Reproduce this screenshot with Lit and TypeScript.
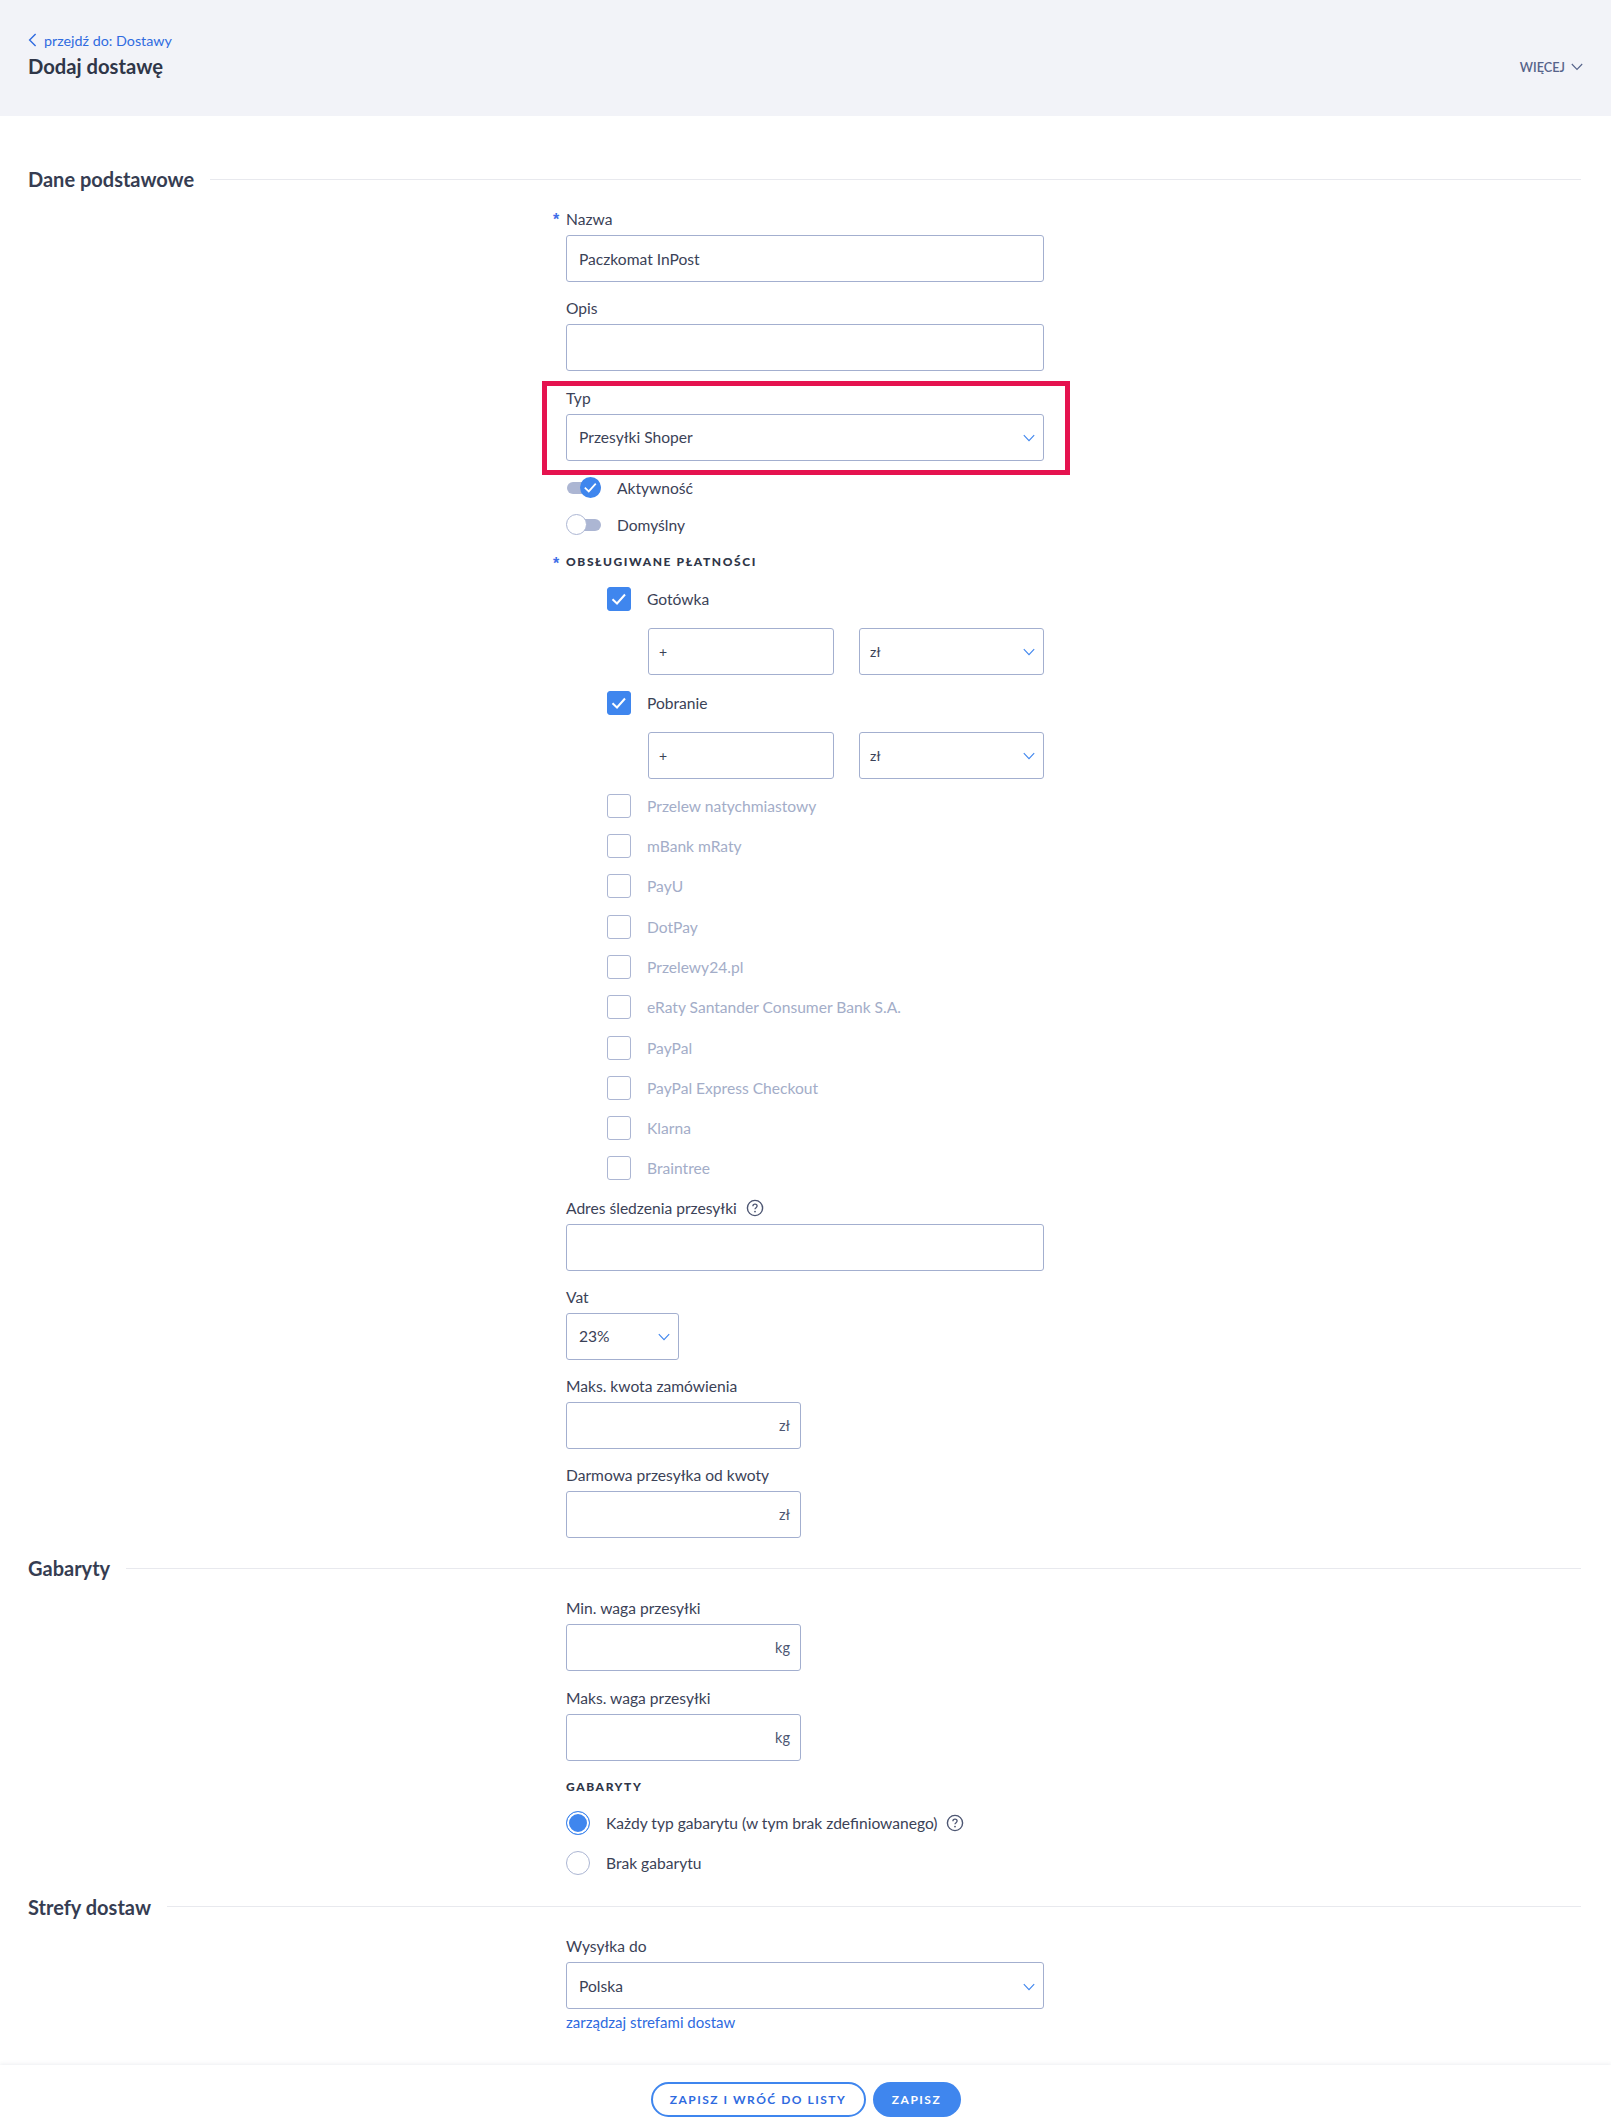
import { LitElement, html, css, svg } from "lit";
import { customElement } from "lit/decorators.js";

const chevron = html`<svg class="chev" viewBox="0 0 12 8" width="12" height="8"><path d="M.8 1.2 6 6.6l5.2-5.4" fill="none" stroke="#3f86ee" stroke-width="1.1"/></svg>`;
const help = html`<svg class="help" viewBox="0 0 18 18" width="18" height="18"><circle cx="9" cy="9" r="7.6" fill="none" stroke="#4d5672" stroke-width="1.4"/><path d="M6.9 7.2c0-1.3 1-2 2.1-2s2.1.7 2.1 1.9c0 1.5-2.1 1.6-2.1 3.2" fill="none" stroke="#4d5672" stroke-width="1.3"/><circle cx="9" cy="12.6" r=".9" fill="#4d5672"/></svg>`;
const tick = svg`<path d="M5.5 12.2 10 16.5l8-9" fill="none" stroke="#fff" stroke-width="2"/>`;

@customElement("app-root")
export class AppRoot extends LitElement {
  static styles = css`
    :host { display: block; font-family: "Lato", "Liberation Sans", sans-serif; font-size: 15.6px; color: #3b4257; background: #fff; height: 2127px; position: relative; overflow: hidden; }
    * { box-sizing: border-box; }
    .header { height: 116px; background: #f2f3f8; padding: 30px 28px 0; display: flex; justify-content: space-between; }
    .back { display: flex; align-items: center; gap: 7px; color: #2f6be0; font-size: 14.3px; height: 20px; }
    h1 { margin: 4px 0 0; font-size: 20.2px; line-height: 24px; font-weight: 700; color: #2f3648; }
    .more { display: flex; align-items: center; gap: 6px; height: 20px; margin-top: 27px; font-size: 12.7px; font-weight: 600; color: #56638a; }
    .section { display: flex; align-items: center; gap: 16px; margin: 0 30px 0 28px; height: 24px; }
    .section h2 { margin: 0; font-size: 20px; font-weight: 700; color: #363d52; white-space: nowrap; line-height: 24px; }
    .section i { flex: 1; height: 1px; background: #e8e9ee; }
    .s1 { margin-top: 51px; }
    .s2 { margin-top: 3.3px; }
    .s3 { margin-top: 12px; }
    .form { width: 478px; margin-left: 566px; display: flex; flex-direction: column; margin-top: 16px; }
    .label { height: 24px; margin-bottom: 4px; line-height: 24px; position: relative; display: flex; align-items: center; gap: 9px; white-space: nowrap; }
    .star { position: absolute; left: -13px; top: 2px; color: #3f6fe8; font: 700 16px/22px "Liberation Sans", sans-serif; letter-spacing: 0; }
    .input { height: 47px; border: 1px solid #a3afcf; border-radius: 3px; display: flex; align-items: center; justify-content: space-between; padding: 0 12px; background: #fff; }
    .field { display: flex; flex-direction: column; margin-bottom: 14.3px; }
    .gab .field { margin-bottom: 15px; }
    .tight { margin-bottom: 0; }
    .chev { flex: none; margin-right: -4px; margin-top: 2px; }
    .w113 { width: 113px; }
    .w235 { width: 235px; }
    .suffix { justify-content: flex-end; padding-right: 10px; font-size: 14.5px; color: #4d5672; }
    .redbox { margin: -5.1px 0 0 -24px; border: 5px solid #e5134f; width: 528px; height: 94px; padding-left: 19px; }
    .redbox .input { width: 478px; }
    .toggle { display: flex; align-items: center; gap: 16px; height: 37px; }
    .first { margin-top: -5.5px; }
    .track { width: 34px; height: 12px; border-radius: 6px; background: #acb6d3; position: relative; margin-left: 1px; }
    .knob { position: absolute; top: -5px; width: 21px; height: 21px; border-radius: 50%; }
    .knob svg { display: block; }
    .knob.on { right: 0; background: #3f86ee; }
    .knob.off { left: -1px; background: #fff; border: 1px solid #acb6d3; }
    .heading { font-size: 12px; font-weight: 900; letter-spacing: 1.6px; text-transform: uppercase; color: #2f3648; position: relative; height: 22px; line-height: 22px; white-space: nowrap; }
    .pay-title { margin-top: 8px; }
    .pays { padding-left: 41px; margin-top: 6px; }
    .list { margin-top: -1px; }
    .check { display: flex; align-items: center; gap: 16px; height: 40.3px; white-space: nowrap; }
    .box { width: 24px; height: 24px; border-radius: 3px; border: 1px solid #acb6d3; background: #fff; flex: none; }
    .box.on { background: #3f86ee; border-color: #3f86ee; }
    .box svg { display: block; margin: -1px; }
    .muted { color: #a3adc8; }
    .sub { display: flex; gap: 25px; padding-left: 41px; margin: 8.5px 0 8px; }
    .sub .input { font-size: 14px; padding: 0 12px 0 10px; }
    .sub .a { width: 186px; }
    .sub .b { width: 185px; }
    .radios { margin-top: 5.5px; }
    .radio { display: flex; align-items: center; gap: 16px; height: 39.5px; white-space: nowrap; }
    .radio .help { margin-left: -7px; }
    .dot { width: 24px; height: 24px; border-radius: 50%; border: 1px solid #acb6d3; flex: none; background: #fff; }
    .dot.on { border-color: #3f86ee; box-shadow: inset 0 0 0 2px #fff; background: #3f86ee; }
    .zones { margin-top: 15.5px; }
    .track-top { margin-top: 7px; }
    .link { color: #2f6be0; font-size: 15px; line-height: 20px; margin-top: 3px; }
    .footer { position: absolute; left: 0; right: 0; top: 2065px; height: 62px; background: #fff; box-shadow: 0 -1px 4px rgba(60,70,100,.09); display: flex; justify-content: center; gap: 7px; padding-top: 17px; }
    .btn { height: 35px; border-radius: 18px; font-size: 12px; font-weight: 700; letter-spacing: 1.5px; display: flex; align-items: center; justify-content: center; }
    .btn.out { width: 215px; border: 2px solid #3f86ee; color: #2f6be0; }
    .btn.fill { width: 88px; background: #3f86ee; color: #fff; }
  `;

  field(label: string, cls = "", value: unknown = "", star = false, suffix = false) {
    return html`<div class="field">
      <div class="label">${star ? html`<span class="star">*</span>` : ""}${label}</div>
      <div class="input ${cls} ${suffix ? "suffix" : ""}">${value}</div>
    </div>`;
  }

  checked(label: string) {
    return html`<div class="check"><span class="box on"><svg viewBox="0 0 24 24" width="24" height="24">${tick}</svg></span>${label}</div>
      <div class="sub"><div class="input a">+</div><div class="input b">zł ${chevron}</div></div>`;
  }

  render() {
    const pays = ["Przelew natychmiastowy", "mBank mRaty", "PayU", "DotPay", "Przelewy24.pl", "eRaty Santander Consumer Bank S.A.", "PayPal", "PayPal Express Checkout", "Klarna", "Braintree"];
    return html`
      <div class="header">
        <div>
          <div class="back"><svg viewBox="0 0 9 14" width="9" height="14"><path d="M7.6 1 1.6 7l6 6" fill="none" stroke="#2f6be0" stroke-width="1.4"/></svg>przejdź do: Dostawy</div>
          <h1>Dodaj dostawę</h1>
        </div>
        <div class="more">WIĘCEJ <svg viewBox="0 0 12 8" width="12" height="8"><path d="M.8 1 6 6.4 11.2 1" fill="none" stroke="#56638a" stroke-width="1.1"/></svg></div>
      </div>
      <div class="section s1"><h2>Dane podstawowe</h2><i></i></div>
      <div class="form">
        ${this.field("Nazwa", "", "Paczkomat InPost", true)}
        ${this.field("Opis")}
        <div class="redbox">
          <div class="label">Typ</div>
          <div class="input">Przesyłki Shoper ${chevron}</div>
        </div>
        <div class="toggle first"><span class="track"><span class="knob on"><svg viewBox="0 0 24 24" width="21" height="21">${tick}</svg></span></span>Aktywność</div>
        <div class="toggle"><span class="track"><span class="knob off"></span></span>Domyślny</div>
        <div class="heading pay-title"><span class="star">*</span>Obsługiwane płatności</div>
        <div class="pays">
          ${this.checked("Gotówka")}
          ${this.checked("Pobranie")}
          <div class="list">
            ${pays.map((p) => html`<div class="check muted"><span class="box"></span>${p}</div>`)}
          </div>
        </div>
        <div class="field track-top">
          <div class="label">Adres śledzenia przesyłki ${help}</div>
          <div class="input"></div>
        </div>
        ${this.field("Vat", "w113", html`23% ${chevron}`)}
        ${this.field("Maks. kwota zamówienia", "w235", "zł", false, true)}
        ${this.field("Darmowa przesyłka od kwoty", "w235", "zł", false, true)}
      </div>
      <div class="section s2"><h2>Gabaryty</h2><i></i></div>
      <div class="form gab">
        ${this.field("Min. waga przesyłki", "w235", "kg", false, true)}
        ${this.field("Maks. waga przesyłki", "w235", "kg", false, true)}
        <div class="heading">Gabaryty</div>
        <div class="radios">
          <div class="radio"><span class="dot on"></span>Każdy typ gabarytu (w tym brak zdefiniowanego) ${help}</div>
          <div class="radio"><span class="dot"></span>Brak gabarytu</div>
        </div>
      </div>
      <div class="section s3"><h2>Strefy dostaw</h2><i></i></div>
      <div class="form zones">
        <div class="field tight">
          <div class="label">Wysyłka do</div>
          <div class="input">Polska ${chevron}</div>
        </div>
        <div class="link">zarządzaj strefami dostaw</div>
      </div>
      <div class="footer">
        <div class="btn out">ZAPISZ I WRÓĆ DO LISTY</div>
        <div class="btn fill">ZAPISZ</div>
      </div>
    `;
  }
}
